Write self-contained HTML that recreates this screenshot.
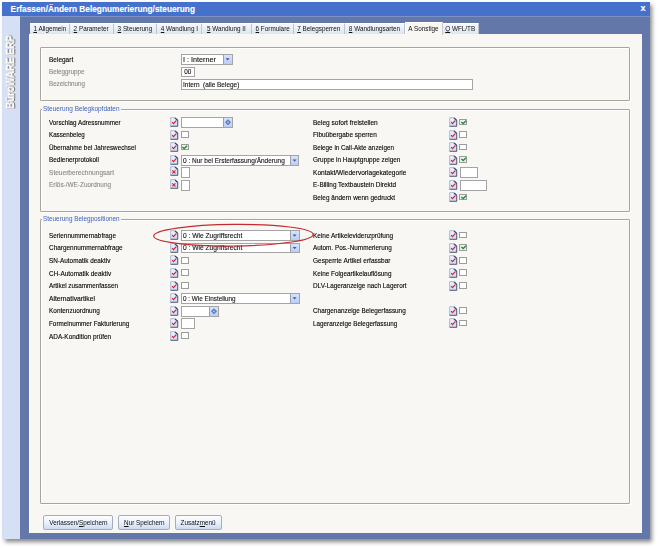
<!DOCTYPE html>
<html><head><meta charset="utf-8">
<style>
html,body{margin:0;padding:0;background:#fff;width:659px;height:548px;overflow:hidden;position:relative;font-family:"Liberation Sans",sans-serif;}
.t{position:absolute;white-space:nowrap;font-size:7.3px;line-height:10px;transform:scaleX(0.87);transform-origin:0 0;-webkit-text-stroke:0.12px currentColor;}
.s{display:inline-block;transform:scaleX(0.87);}
.ic{position:absolute;overflow:visible;}
.cb{position:absolute;width:6px;height:4.6px;border:1px solid #9c9c9c;border-radius:0.5px;background:#fff;margin-left:-0.4px;}
.cb.ck{background:#e6f5e6;}
.in{position:absolute;box-sizing:border-box;border:1px solid #a4a4a4;background:#fff;}
.bt{position:absolute;box-sizing:border-box;background:linear-gradient(#d6e3fd,#bccdf5);border-left:1px solid #9aa0ad;}
.gb{position:absolute;box-sizing:border-box;border:1px solid #a7a69c;border-radius:1px;box-shadow:inset 1px 1px 0 #fff,1px 1px 0 #fff;}
.gl{position:absolute;height:10px;background:#f8f7f3;}
.btn{position:absolute;box-sizing:border-box;border:1px solid #a3adbf;border-radius:2px;background:linear-gradient(#fdfeff,#e9f0fb 55%,#cbdaf3);font-size:7.3px;line-height:13.6px;text-align:center;color:#111;white-space:nowrap;}
.tab{position:absolute;top:23.3px;height:10.7px;box-sizing:border-box;background:linear-gradient(#f5f8fc,#dde5f0);border-right:1px solid #b9c4d4;border-top:1px solid #fff;font-size:7.3px;line-height:10.2px;text-align:center;color:#111;white-space:nowrap;}
.tab.act{top:22px;height:12.5px;background:#f8f7f3;border-right:1px solid #c9cdd3;border-left:1px solid #fff;border-top:1px solid #fff;z-index:2;line-height:12px;}
#shadow{position:absolute;left:5px;top:5px;width:647px;height:537px;background:#6a6a6a;filter:blur(2.2px);opacity:.8;}
#win{position:absolute;left:1.5px;top:1.5px;width:648.7px;height:537.5px;background:#6377a8;overflow:hidden;}
#title{position:absolute;left:0;top:0;width:100%;height:14.3px;background:#4571cc;box-shadow:0 1px 0 #7a93c6;}
#side{position:absolute;left:0;top:14.3px;width:18.5px;height:523.2px;background:#d5e0f4;}
#panel{position:absolute;left:27.5px;top:32.2px;width:613px;height:499.6px;background:#f8f7f3;border-left:1px solid #fff;box-sizing:border-box;}
#root{position:absolute;left:0;top:0;width:659px;height:548px;}
</style></head><body><div id="root">
<svg width="0" height="0" style="position:absolute"><defs><linearGradient id="ig" x1="0" y1="0" x2="0.6" y2="1"><stop offset="0" stop-color="#f2f6ff"/><stop offset="1" stop-color="#d0dbef"/></linearGradient></defs></svg>
<div id="shadow"></div>
<div id="win">
<div id="title"></div>
<div id="side"></div>
<div id="panel"></div>
</div>
<div class="t" style="left:10.6px;top:3.6px;font-size:8.3px;font-weight:bold;color:#fff;line-height:10px;transform:none;">Erfassen/Ändern Belegnumerierung/steuerung</div>
<div class="t" style="left:640.5px;top:3px;font-size:9px;font-weight:bold;color:#fff;line-height:10px;transform:none;">x</div>
<div class="t" style="left:-38.3px;top:67px;width:100px;text-align:center;font-size:10px;font-weight:bold;color:#666;line-height:10px;transform:rotate(-90deg) scaleX(0.96);transform-origin:50% 50%;-webkit-text-stroke:0.35px #666;will-change:transform;">BüroWARE ERP</div>
<div class="t" style="left:-39.5px;top:67px;width:100px;text-align:center;font-size:10px;font-weight:bold;color:#fff;line-height:10px;transform:rotate(-90deg) scaleX(0.96);transform-origin:50% 50%;-webkit-text-stroke:0.3px #fff;will-change:transform;">BüroWARE ERP</div>
<div class="tab" style="left:30px;width:40px"><span class="s"><u>1</u> Allgemein</span></div>
<div class="tab" style="left:70px;width:44px"><span class="s"><u>2</u> Parameter</span></div>
<div class="tab" style="left:114px;width:43px"><span class="s"><u>3</u> Steuerung</span></div>
<div class="tab" style="left:157px;width:45px"><span class="s"><u>4</u> Wandlung I</span></div>
<div class="tab" style="left:202px;width:50px"><span class="s"><u>5</u> Wandlung II</span></div>
<div class="tab" style="left:252px;width:42px"><span class="s"><u>6</u> Formulare</span></div>
<div class="tab" style="left:294px;width:51px"><span class="s"><u>7</u> Belegsperren</span></div>
<div class="tab" style="left:345px;width:60px"><span class="s"><u>8</u> Wandlungsarten</span></div>
<div class="tab act" style="left:404.5px;width:38px"><span class="s">A Sonstige</span></div>
<div class="tab" style="left:442px;width:37px"><span class="s"><u>Q</u> WFL/TB</span></div>
<div class="gb" style="left:40px;top:47px;width:590px;height:54px"></div>
<div class="t" style="left:49px;top:55.20px;color:#000;font-size:7.3px;transform:scaleX(0.890);">Belegart</div>
<div class="t" style="left:49px;top:67.20px;color:#8a8a8a;font-size:7.3px;transform:scaleX(0.860);">Beleggruppe</div>
<div class="t" style="left:49px;top:79.20px;color:#8a8a8a;font-size:7.3px;transform:scaleX(0.851);">Bezeichnung</div>
<div class="in" style="left:181.2px;top:54.25px;width:51.6px;height:10.3px"></div>
<div class="t" style="left:183.2px;top:55.20px;color:#111;transform:scaleX(0.9860028182245185);">I : Interner</div>
<div class="bt" style="left:223.00px;top:55.25px;width:8.8px;height:8.30px"></div>
<svg class="ic" style="left:223.00px;top:55.25px" width="9" height="8.30"><path d="M2.6 3.25 H6.6 L4.6 5.45 Z" fill="#3d5a9c"/></svg>
<div class="in" style="left:181.2px;top:66.50px;width:13.4px;height:10.6px"></div>
<div class="t" style="left:181.2px;width:15.40px;text-align:center;top:67.20px;color:#111;">00</div>
<div class="in" style="left:181.2px;top:79.30px;width:291.5px;height:10.6px"></div>
<div class="t" style="left:183.2px;top:80.20px;color:#111;transform:scaleX(0.8840039254170755);">Intern&nbsp; (alle Belege)</div>
<div class="gb" style="left:40px;top:109px;width:590px;height:103px"></div>
<div class="gl" style="left:42px;top:104px;width:79px"></div>
<div class="t" style="left:42.6px;top:104.3px;color:#3f62b8;-webkit-text-stroke:0;transform:scaleX(0.886)">Steuerung Belegkopfdaten</div>
<div class="t" style="left:49px;top:118.20px;color:#000;font-size:7.3px;transform:scaleX(0.861);">Vorschlag Adressnummer</div>
<svg class="ic" style="left:170px;top:117.20px" width="9" height="10" viewBox="0 0 9 10"><path d="M0.7 0.7 H5.1 L7.7 3.3 V9.3 H0.7 Z" fill="url(#ig)" stroke="#9aa6cc" stroke-width="0.8"/><path d="M0.6 9.3 H7.7 V3.4" stroke="#555b72" stroke-width="0.9" fill="none"/><path d="M5.0 0.8 L7.7 3.5" stroke="#34406c" stroke-width="1.2" fill="none"/><path d="M2.1 5.2 L3.5 6.6 L6.3 3.6" stroke="#c02a40" stroke-width="1.2" fill="none"/></svg>
<div class="t" style="left:49px;top:130.20px;color:#000;font-size:7.3px;transform:scaleX(0.848);">Kassenbeleg</div>
<svg class="ic" style="left:170px;top:129.70px" width="9" height="10" viewBox="0 0 9 10"><path d="M0.7 0.7 H5.1 L7.7 3.3 V9.3 H0.7 Z" fill="url(#ig)" stroke="#9aa6cc" stroke-width="0.8"/><path d="M0.6 9.3 H7.7 V3.4" stroke="#555b72" stroke-width="0.9" fill="none"/><path d="M5.0 0.8 L7.7 3.5" stroke="#34406c" stroke-width="1.2" fill="none"/><path d="M2.1 5.2 L3.5 6.6 L6.3 3.6" stroke="#c02a40" stroke-width="1.2" fill="none"/></svg>
<div class="t" style="left:49px;top:143.20px;color:#000;font-size:7.3px;transform:scaleX(0.868);">Übernahme bei Jahreswechsel</div>
<svg class="ic" style="left:170px;top:142.20px" width="9" height="10" viewBox="0 0 9 10"><path d="M0.7 0.7 H5.1 L7.7 3.3 V9.3 H0.7 Z" fill="url(#ig)" stroke="#9aa6cc" stroke-width="0.8"/><path d="M0.6 9.3 H7.7 V3.4" stroke="#555b72" stroke-width="0.9" fill="none"/><path d="M5.0 0.8 L7.7 3.5" stroke="#34406c" stroke-width="1.2" fill="none"/><path d="M2.1 5.2 L3.5 6.6 L6.3 3.6" stroke="#c02a40" stroke-width="1.2" fill="none"/></svg>
<div class="t" style="left:49px;top:155.20px;color:#000;font-size:7.3px;transform:scaleX(0.879);">Bedienerprotokoll</div>
<svg class="ic" style="left:170px;top:154.70px" width="9" height="10" viewBox="0 0 9 10"><path d="M0.7 0.7 H5.1 L7.7 3.3 V9.3 H0.7 Z" fill="url(#ig)" stroke="#9aa6cc" stroke-width="0.8"/><path d="M0.6 9.3 H7.7 V3.4" stroke="#555b72" stroke-width="0.9" fill="none"/><path d="M5.0 0.8 L7.7 3.5" stroke="#34406c" stroke-width="1.2" fill="none"/><path d="M2.1 5.2 L3.5 6.6 L6.3 3.6" stroke="#c02a40" stroke-width="1.2" fill="none"/></svg>
<div class="t" style="left:49px;top:168.20px;color:#8a8a8a;font-size:7.3px;transform:scaleX(0.900);">Steuerberechnungsart</div>
<svg class="ic" style="left:170px;top:166.10px" width="9" height="10" viewBox="0 0 9 10"><path d="M0.7 0.7 H5.1 L7.7 3.3 V9.3 H0.7 Z" fill="url(#ig)" stroke="#9aa6cc" stroke-width="0.8"/><path d="M0.6 9.3 H7.7 V3.4" stroke="#555b72" stroke-width="0.9" fill="none"/><path d="M5.0 0.8 L7.7 3.5" stroke="#34406c" stroke-width="1.2" fill="none"/><path d="M2.3 4.3 L5.5 7.3 M5.5 4.3 L2.3 7.3" stroke="#c4283a" stroke-width="1.1" fill="none"/></svg>
<div class="t" style="left:49px;top:180.20px;color:#8a8a8a;font-size:7.3px;transform:scaleX(0.879);">Erlös-/WE-Zuordnung</div>
<svg class="ic" style="left:170px;top:178.60px" width="9" height="10" viewBox="0 0 9 10"><path d="M0.7 0.7 H5.1 L7.7 3.3 V9.3 H0.7 Z" fill="url(#ig)" stroke="#9aa6cc" stroke-width="0.8"/><path d="M0.6 9.3 H7.7 V3.4" stroke="#555b72" stroke-width="0.9" fill="none"/><path d="M5.0 0.8 L7.7 3.5" stroke="#34406c" stroke-width="1.2" fill="none"/><path d="M2.3 4.3 L5.5 7.3 M5.5 4.3 L2.3 7.3" stroke="#c4283a" stroke-width="1.1" fill="none"/></svg>
<div class="in" style="left:181.2px;top:117.10px;width:51.6px;height:10.6px"></div>
<div class="bt" style="left:223.00px;top:118.10px;width:8.8px;height:8.60px"></div>
<svg class="ic" style="left:223.00px;top:118.10px" width="9" height="8.60"><path d="M5 1.30 L8 4.30 L5 7.30 L2 4.30 Z" fill="#5a76bf"/><path d="M5 3.00 L6.3 4.30 L5 5.60 L3.7 4.30 Z" fill="#a9bdf0"/></svg>
<div class="cb" style="left:181.2px;top:131.15px"></div>
<div class="cb ck" style="left:181.2px;top:143.65px"></div>
<svg class="ic" style="left:181.2px;top:143.65px" width="8" height="7" viewBox="0 0 8 7"><path d="M1.3 3.0 L3.2 4.6 L6.1 1.7" stroke="#2a8a3a" stroke-width="1.4" fill="none"/></svg>
<div class="in" style="left:181.2px;top:154.70px;width:118.3px;height:11px"></div>
<div class="t" style="left:183.2px;top:156.20px;color:#111;transform:scaleX(0.8899330692528343);">0 : Nur bei Ersterfassung/Änderung</div>
<div class="bt" style="left:289.70px;top:155.70px;width:8.8px;height:9.00px"></div>
<svg class="ic" style="left:289.70px;top:155.70px" width="9" height="9.00"><path d="M2.6 3.60 H6.6 L4.6 5.80 Z" fill="#3d5a9c"/></svg>
<div class="in" style="left:181.2px;top:167.05px;width:8.4px;height:10.7px"></div>
<div class="in" style="left:181.2px;top:179.90px;width:8.4px;height:11px"></div>
<div class="t" style="left:313px;top:118.20px;color:#000;font-size:7.3px;transform:scaleX(0.897);">Beleg sofort freistellen</div>
<svg class="ic" style="left:449px;top:117.20px" width="9" height="10" viewBox="0 0 9 10"><path d="M0.7 0.7 H5.1 L7.7 3.3 V9.3 H0.7 Z" fill="url(#ig)" stroke="#9aa6cc" stroke-width="0.8"/><path d="M0.6 9.3 H7.7 V3.4" stroke="#555b72" stroke-width="0.9" fill="none"/><path d="M5.0 0.8 L7.7 3.5" stroke="#34406c" stroke-width="1.2" fill="none"/><path d="M2.1 5.2 L3.5 6.6 L6.3 3.6" stroke="#c02a40" stroke-width="1.2" fill="none"/></svg>
<div class="cb ck" style="left:459.6px;top:118.65px"></div>
<svg class="ic" style="left:459.6px;top:118.65px" width="8" height="7" viewBox="0 0 8 7"><path d="M1.3 3.0 L3.2 4.6 L6.1 1.7" stroke="#2a8a3a" stroke-width="1.4" fill="none"/></svg>
<div class="t" style="left:313px;top:130.20px;color:#000;font-size:7.3px;transform:scaleX(0.888);">Fibuübergabe sperren</div>
<svg class="ic" style="left:449px;top:129.70px" width="9" height="10" viewBox="0 0 9 10"><path d="M0.7 0.7 H5.1 L7.7 3.3 V9.3 H0.7 Z" fill="url(#ig)" stroke="#9aa6cc" stroke-width="0.8"/><path d="M0.6 9.3 H7.7 V3.4" stroke="#555b72" stroke-width="0.9" fill="none"/><path d="M5.0 0.8 L7.7 3.5" stroke="#34406c" stroke-width="1.2" fill="none"/><path d="M2.1 5.2 L3.5 6.6 L6.3 3.6" stroke="#c02a40" stroke-width="1.2" fill="none"/></svg>
<div class="cb" style="left:459.6px;top:131.15px"></div>
<div class="t" style="left:313px;top:143.20px;color:#000;font-size:7.3px;transform:scaleX(0.864);">Belege in Call-Akte anzeigen</div>
<svg class="ic" style="left:449px;top:142.20px" width="9" height="10" viewBox="0 0 9 10"><path d="M0.7 0.7 H5.1 L7.7 3.3 V9.3 H0.7 Z" fill="url(#ig)" stroke="#9aa6cc" stroke-width="0.8"/><path d="M0.6 9.3 H7.7 V3.4" stroke="#555b72" stroke-width="0.9" fill="none"/><path d="M5.0 0.8 L7.7 3.5" stroke="#34406c" stroke-width="1.2" fill="none"/><path d="M2.1 5.2 L3.5 6.6 L6.3 3.6" stroke="#c02a40" stroke-width="1.2" fill="none"/></svg>
<div class="cb" style="left:459.6px;top:143.65px"></div>
<div class="t" style="left:313px;top:155.20px;color:#000;font-size:7.3px;transform:scaleX(0.875);">Gruppe in Hauptgruppe zeigen</div>
<svg class="ic" style="left:449px;top:154.70px" width="9" height="10" viewBox="0 0 9 10"><path d="M0.7 0.7 H5.1 L7.7 3.3 V9.3 H0.7 Z" fill="url(#ig)" stroke="#9aa6cc" stroke-width="0.8"/><path d="M0.6 9.3 H7.7 V3.4" stroke="#555b72" stroke-width="0.9" fill="none"/><path d="M5.0 0.8 L7.7 3.5" stroke="#34406c" stroke-width="1.2" fill="none"/><path d="M2.1 5.2 L3.5 6.6 L6.3 3.6" stroke="#c02a40" stroke-width="1.2" fill="none"/></svg>
<div class="cb ck" style="left:459.6px;top:156.15px"></div>
<svg class="ic" style="left:459.6px;top:156.15px" width="8" height="7" viewBox="0 0 8 7"><path d="M1.3 3.0 L3.2 4.6 L6.1 1.7" stroke="#2a8a3a" stroke-width="1.4" fill="none"/></svg>
<div class="t" style="left:313px;top:168.20px;color:#000;font-size:7.3px;transform:scaleX(0.900);">Kontakt/Wiedervorlagekategorie</div>
<svg class="ic" style="left:449px;top:167.20px" width="9" height="10" viewBox="0 0 9 10"><path d="M0.7 0.7 H5.1 L7.7 3.3 V9.3 H0.7 Z" fill="url(#ig)" stroke="#9aa6cc" stroke-width="0.8"/><path d="M0.6 9.3 H7.7 V3.4" stroke="#555b72" stroke-width="0.9" fill="none"/><path d="M5.0 0.8 L7.7 3.5" stroke="#34406c" stroke-width="1.2" fill="none"/><path d="M2.1 5.2 L3.5 6.6 L6.3 3.6" stroke="#c02a40" stroke-width="1.2" fill="none"/></svg>
<div class="in" style="left:459.6px;top:167.10px;width:18.4px;height:10.6px"></div>
<div class="t" style="left:313px;top:180.20px;color:#000;font-size:7.3px;transform:scaleX(0.876);">E-Billing Textbaustein Direktd</div>
<svg class="ic" style="left:449px;top:179.70px" width="9" height="10" viewBox="0 0 9 10"><path d="M0.7 0.7 H5.1 L7.7 3.3 V9.3 H0.7 Z" fill="url(#ig)" stroke="#9aa6cc" stroke-width="0.8"/><path d="M0.6 9.3 H7.7 V3.4" stroke="#555b72" stroke-width="0.9" fill="none"/><path d="M5.0 0.8 L7.7 3.5" stroke="#34406c" stroke-width="1.2" fill="none"/><path d="M2.1 5.2 L3.5 6.6 L6.3 3.6" stroke="#c02a40" stroke-width="1.2" fill="none"/></svg>
<div class="in" style="left:459.6px;top:179.90px;width:27.4px;height:11px"></div>
<div class="t" style="left:313px;top:193.20px;color:#000;font-size:7.3px;transform:scaleX(0.884);">Beleg ändern wenn gedruckt</div>
<svg class="ic" style="left:449px;top:192.20px" width="9" height="10" viewBox="0 0 9 10"><path d="M0.7 0.7 H5.1 L7.7 3.3 V9.3 H0.7 Z" fill="url(#ig)" stroke="#9aa6cc" stroke-width="0.8"/><path d="M0.6 9.3 H7.7 V3.4" stroke="#555b72" stroke-width="0.9" fill="none"/><path d="M5.0 0.8 L7.7 3.5" stroke="#34406c" stroke-width="1.2" fill="none"/><path d="M2.1 5.2 L3.5 6.6 L6.3 3.6" stroke="#c02a40" stroke-width="1.2" fill="none"/></svg>
<div class="cb ck" style="left:459.6px;top:193.65px"></div>
<svg class="ic" style="left:459.6px;top:193.65px" width="8" height="7" viewBox="0 0 8 7"><path d="M1.3 3.0 L3.2 4.6 L6.1 1.7" stroke="#2a8a3a" stroke-width="1.4" fill="none"/></svg>
<div class="gb" style="left:40px;top:219px;width:590px;height:285px"></div>
<div class="gl" style="left:42px;top:214px;width:79px"></div>
<div class="t" style="left:42.6px;top:214.3px;color:#3f62b8;-webkit-text-stroke:0;transform:scaleX(0.874)">Steuerung Belegpositionen</div>
<div class="t" style="left:49px;top:231.20px;color:#000;font-size:7.3px;transform:scaleX(0.873);">Seriennummernabfrage</div>
<svg class="ic" style="left:170px;top:230.30px" width="9" height="10" viewBox="0 0 9 10"><path d="M0.7 0.7 H5.1 L7.7 3.3 V9.3 H0.7 Z" fill="url(#ig)" stroke="#9aa6cc" stroke-width="0.8"/><path d="M0.6 9.3 H7.7 V3.4" stroke="#555b72" stroke-width="0.9" fill="none"/><path d="M5.0 0.8 L7.7 3.5" stroke="#34406c" stroke-width="1.2" fill="none"/><path d="M2.1 5.2 L3.5 6.6 L6.3 3.6" stroke="#c02a40" stroke-width="1.2" fill="none"/></svg>
<div class="t" style="left:49px;top:243.20px;color:#000;font-size:7.3px;transform:scaleX(0.881);">Chargennummernabfrage</div>
<svg class="ic" style="left:170px;top:242.88px" width="9" height="10" viewBox="0 0 9 10"><path d="M0.7 0.7 H5.1 L7.7 3.3 V9.3 H0.7 Z" fill="url(#ig)" stroke="#9aa6cc" stroke-width="0.8"/><path d="M0.6 9.3 H7.7 V3.4" stroke="#555b72" stroke-width="0.9" fill="none"/><path d="M5.0 0.8 L7.7 3.5" stroke="#34406c" stroke-width="1.2" fill="none"/><path d="M2.1 5.2 L3.5 6.6 L6.3 3.6" stroke="#c02a40" stroke-width="1.2" fill="none"/></svg>
<div class="t" style="left:49px;top:256.20px;color:#000;font-size:7.3px;transform:scaleX(0.875);">SN-Automatik deaktiv</div>
<svg class="ic" style="left:170px;top:255.46px" width="9" height="10" viewBox="0 0 9 10"><path d="M0.7 0.7 H5.1 L7.7 3.3 V9.3 H0.7 Z" fill="url(#ig)" stroke="#9aa6cc" stroke-width="0.8"/><path d="M0.6 9.3 H7.7 V3.4" stroke="#555b72" stroke-width="0.9" fill="none"/><path d="M5.0 0.8 L7.7 3.5" stroke="#34406c" stroke-width="1.2" fill="none"/><path d="M2.1 5.2 L3.5 6.6 L6.3 3.6" stroke="#c02a40" stroke-width="1.2" fill="none"/></svg>
<div class="t" style="left:49px;top:269.20px;color:#000;font-size:7.3px;transform:scaleX(0.881);">CH-Automatik deaktiv</div>
<svg class="ic" style="left:170px;top:268.04px" width="9" height="10" viewBox="0 0 9 10"><path d="M0.7 0.7 H5.1 L7.7 3.3 V9.3 H0.7 Z" fill="url(#ig)" stroke="#9aa6cc" stroke-width="0.8"/><path d="M0.6 9.3 H7.7 V3.4" stroke="#555b72" stroke-width="0.9" fill="none"/><path d="M5.0 0.8 L7.7 3.5" stroke="#34406c" stroke-width="1.2" fill="none"/><path d="M2.1 5.2 L3.5 6.6 L6.3 3.6" stroke="#c02a40" stroke-width="1.2" fill="none"/></svg>
<div class="t" style="left:49px;top:281.20px;color:#000;font-size:7.3px;transform:scaleX(0.868);">Artikel zusammenfassen</div>
<svg class="ic" style="left:170px;top:280.62px" width="9" height="10" viewBox="0 0 9 10"><path d="M0.7 0.7 H5.1 L7.7 3.3 V9.3 H0.7 Z" fill="url(#ig)" stroke="#9aa6cc" stroke-width="0.8"/><path d="M0.6 9.3 H7.7 V3.4" stroke="#555b72" stroke-width="0.9" fill="none"/><path d="M5.0 0.8 L7.7 3.5" stroke="#34406c" stroke-width="1.2" fill="none"/><path d="M2.1 5.2 L3.5 6.6 L6.3 3.6" stroke="#c02a40" stroke-width="1.2" fill="none"/></svg>
<div class="t" style="left:49px;top:294.20px;color:#000;font-size:7.3px;transform:scaleX(0.920);">Alternativartikel</div>
<svg class="ic" style="left:170px;top:293.20px" width="9" height="10" viewBox="0 0 9 10"><path d="M0.7 0.7 H5.1 L7.7 3.3 V9.3 H0.7 Z" fill="url(#ig)" stroke="#9aa6cc" stroke-width="0.8"/><path d="M0.6 9.3 H7.7 V3.4" stroke="#555b72" stroke-width="0.9" fill="none"/><path d="M5.0 0.8 L7.7 3.5" stroke="#34406c" stroke-width="1.2" fill="none"/><path d="M2.1 5.2 L3.5 6.6 L6.3 3.6" stroke="#c02a40" stroke-width="1.2" fill="none"/></svg>
<div class="t" style="left:49px;top:306.20px;color:#000;font-size:7.3px;transform:scaleX(0.883);">Kontenzuordnung</div>
<svg class="ic" style="left:170px;top:305.78px" width="9" height="10" viewBox="0 0 9 10"><path d="M0.7 0.7 H5.1 L7.7 3.3 V9.3 H0.7 Z" fill="url(#ig)" stroke="#9aa6cc" stroke-width="0.8"/><path d="M0.6 9.3 H7.7 V3.4" stroke="#555b72" stroke-width="0.9" fill="none"/><path d="M5.0 0.8 L7.7 3.5" stroke="#34406c" stroke-width="1.2" fill="none"/><path d="M2.1 5.2 L3.5 6.6 L6.3 3.6" stroke="#c02a40" stroke-width="1.2" fill="none"/></svg>
<div class="t" style="left:49px;top:319.20px;color:#000;font-size:7.3px;transform:scaleX(0.868);">Formelnummer Fakturierung</div>
<svg class="ic" style="left:170px;top:318.36px" width="9" height="10" viewBox="0 0 9 10"><path d="M0.7 0.7 H5.1 L7.7 3.3 V9.3 H0.7 Z" fill="url(#ig)" stroke="#9aa6cc" stroke-width="0.8"/><path d="M0.6 9.3 H7.7 V3.4" stroke="#555b72" stroke-width="0.9" fill="none"/><path d="M5.0 0.8 L7.7 3.5" stroke="#34406c" stroke-width="1.2" fill="none"/><path d="M2.1 5.2 L3.5 6.6 L6.3 3.6" stroke="#c02a40" stroke-width="1.2" fill="none"/></svg>
<div class="t" style="left:49px;top:332.20px;color:#000;font-size:7.3px;transform:scaleX(0.881);">ADA-Kondition prüfen</div>
<svg class="ic" style="left:170px;top:330.94px" width="9" height="10" viewBox="0 0 9 10"><path d="M0.7 0.7 H5.1 L7.7 3.3 V9.3 H0.7 Z" fill="url(#ig)" stroke="#9aa6cc" stroke-width="0.8"/><path d="M0.6 9.3 H7.7 V3.4" stroke="#555b72" stroke-width="0.9" fill="none"/><path d="M5.0 0.8 L7.7 3.5" stroke="#34406c" stroke-width="1.2" fill="none"/><path d="M2.1 5.2 L3.5 6.6 L6.3 3.6" stroke="#c02a40" stroke-width="1.2" fill="none"/></svg>
<div class="in" style="left:181.2px;top:230.10px;width:118.6px;height:10.8px"></div>
<div class="t" style="left:183.2px;top:231.20px;color:#111;transform:scaleX(0.9116546762589928);">0 : Wie Zugriffsrecht</div>
<div class="bt" style="left:290.00px;top:231.10px;width:8.8px;height:8.80px"></div>
<svg class="ic" style="left:290.00px;top:231.10px" width="9" height="8.80"><path d="M2.6 3.50 H6.6 L4.6 5.70 Z" fill="#3d5a9c"/></svg>
<div class="in" style="left:181.2px;top:243.08px;width:118.6px;height:10px"></div>
<div class="t" style="left:183.2px;top:243.20px;color:#111;transform:scaleX(0.9116546762589928);">0 : Wie Zugriffsrecht</div>
<div class="bt" style="left:290.00px;top:244.08px;width:8.8px;height:8.00px"></div>
<svg class="ic" style="left:290.00px;top:244.08px" width="9" height="8.00"><path d="M2.6 3.10 H6.6 L4.6 5.30 Z" fill="#3d5a9c"/></svg>
<div class="cb" style="left:181.2px;top:256.91px"></div>
<div class="cb" style="left:181.2px;top:269.49px"></div>
<div class="cb" style="left:181.2px;top:282.07px"></div>
<div class="in" style="left:181.2px;top:293.20px;width:118.6px;height:10.4px"></div>
<div class="t" style="left:183.2px;top:294.20px;color:#111;transform:scaleX(0.8703205791106515);">0 : Wie Einstellung</div>
<div class="bt" style="left:290.00px;top:294.20px;width:8.8px;height:8.40px"></div>
<svg class="ic" style="left:290.00px;top:294.20px" width="9" height="8.40"><path d="M2.6 3.30 H6.6 L4.6 5.50 Z" fill="#3d5a9c"/></svg>
<div class="in" style="left:181.2px;top:305.93px;width:37.5px;height:10.7px"></div>
<div class="bt" style="left:208.90px;top:306.93px;width:8.8px;height:8.70px"></div>
<svg class="ic" style="left:208.90px;top:306.93px" width="9" height="8.70"><path d="M5 1.35 L8 4.35 L5 7.35 L2 4.35 Z" fill="#5a76bf"/><path d="M5 3.05 L6.3 4.35 L5 5.65 L3.7 4.35 Z" fill="#a9bdf0"/></svg>
<div class="in" style="left:181.2px;top:318.06px;width:13.4px;height:11px"></div>
<div class="cb" style="left:181.2px;top:332.39px"></div>
<div class="t" style="left:313px;top:231.20px;color:#000;font-size:7.3px;transform:scaleX(0.886);">Keine Artikelevidenzprüfung</div>
<svg class="ic" style="left:449px;top:230.30px" width="9" height="10" viewBox="0 0 9 10"><path d="M0.7 0.7 H5.1 L7.7 3.3 V9.3 H0.7 Z" fill="url(#ig)" stroke="#9aa6cc" stroke-width="0.8"/><path d="M0.6 9.3 H7.7 V3.4" stroke="#555b72" stroke-width="0.9" fill="none"/><path d="M5.0 0.8 L7.7 3.5" stroke="#34406c" stroke-width="1.2" fill="none"/><path d="M2.1 5.2 L3.5 6.6 L6.3 3.6" stroke="#c02a40" stroke-width="1.2" fill="none"/></svg>
<div class="cb" style="left:459.6px;top:231.75px"></div>
<div class="t" style="left:313px;top:243.20px;color:#000;font-size:7.3px;transform:scaleX(0.871);">Autom. Pos.-Nummerierung</div>
<svg class="ic" style="left:449px;top:242.88px" width="9" height="10" viewBox="0 0 9 10"><path d="M0.7 0.7 H5.1 L7.7 3.3 V9.3 H0.7 Z" fill="url(#ig)" stroke="#9aa6cc" stroke-width="0.8"/><path d="M0.6 9.3 H7.7 V3.4" stroke="#555b72" stroke-width="0.9" fill="none"/><path d="M5.0 0.8 L7.7 3.5" stroke="#34406c" stroke-width="1.2" fill="none"/><path d="M2.1 5.2 L3.5 6.6 L6.3 3.6" stroke="#c02a40" stroke-width="1.2" fill="none"/></svg>
<div class="cb ck" style="left:459.6px;top:244.33px"></div>
<svg class="ic" style="left:459.6px;top:244.33px" width="8" height="7" viewBox="0 0 8 7"><path d="M1.3 3.0 L3.2 4.6 L6.1 1.7" stroke="#2a8a3a" stroke-width="1.4" fill="none"/></svg>
<div class="t" style="left:313px;top:256.20px;color:#000;font-size:7.3px;transform:scaleX(0.892);">Gesperrte Artikel erfassbar</div>
<svg class="ic" style="left:449px;top:255.46px" width="9" height="10" viewBox="0 0 9 10"><path d="M0.7 0.7 H5.1 L7.7 3.3 V9.3 H0.7 Z" fill="url(#ig)" stroke="#9aa6cc" stroke-width="0.8"/><path d="M0.6 9.3 H7.7 V3.4" stroke="#555b72" stroke-width="0.9" fill="none"/><path d="M5.0 0.8 L7.7 3.5" stroke="#34406c" stroke-width="1.2" fill="none"/><path d="M2.1 5.2 L3.5 6.6 L6.3 3.6" stroke="#c02a40" stroke-width="1.2" fill="none"/></svg>
<div class="cb" style="left:459.6px;top:256.91px"></div>
<div class="t" style="left:313px;top:269.20px;color:#000;font-size:7.3px;transform:scaleX(0.871);">Keine Folgeartikelauflösung</div>
<svg class="ic" style="left:449px;top:268.04px" width="9" height="10" viewBox="0 0 9 10"><path d="M0.7 0.7 H5.1 L7.7 3.3 V9.3 H0.7 Z" fill="url(#ig)" stroke="#9aa6cc" stroke-width="0.8"/><path d="M0.6 9.3 H7.7 V3.4" stroke="#555b72" stroke-width="0.9" fill="none"/><path d="M5.0 0.8 L7.7 3.5" stroke="#34406c" stroke-width="1.2" fill="none"/><path d="M2.1 5.2 L3.5 6.6 L6.3 3.6" stroke="#c02a40" stroke-width="1.2" fill="none"/></svg>
<div class="cb" style="left:459.6px;top:269.49px"></div>
<div class="t" style="left:313px;top:281.20px;color:#000;font-size:7.3px;transform:scaleX(0.875);">DLV-Lageranzeige nach Lagerort</div>
<svg class="ic" style="left:449px;top:280.62px" width="9" height="10" viewBox="0 0 9 10"><path d="M0.7 0.7 H5.1 L7.7 3.3 V9.3 H0.7 Z" fill="url(#ig)" stroke="#9aa6cc" stroke-width="0.8"/><path d="M0.6 9.3 H7.7 V3.4" stroke="#555b72" stroke-width="0.9" fill="none"/><path d="M5.0 0.8 L7.7 3.5" stroke="#34406c" stroke-width="1.2" fill="none"/><path d="M2.1 5.2 L3.5 6.6 L6.3 3.6" stroke="#c02a40" stroke-width="1.2" fill="none"/></svg>
<div class="cb" style="left:459.6px;top:282.07px"></div>
<div class="t" style="left:313px;top:306.20px;color:#000;font-size:7.3px;transform:scaleX(0.872);">Chargenanzeige Belegerfassung</div>
<svg class="ic" style="left:449px;top:305.78px" width="9" height="10" viewBox="0 0 9 10"><path d="M0.7 0.7 H5.1 L7.7 3.3 V9.3 H0.7 Z" fill="url(#ig)" stroke="#9aa6cc" stroke-width="0.8"/><path d="M0.6 9.3 H7.7 V3.4" stroke="#555b72" stroke-width="0.9" fill="none"/><path d="M5.0 0.8 L7.7 3.5" stroke="#34406c" stroke-width="1.2" fill="none"/><path d="M2.1 5.2 L3.5 6.6 L6.3 3.6" stroke="#c02a40" stroke-width="1.2" fill="none"/></svg>
<div class="cb" style="left:459.6px;top:307.23px"></div>
<div class="t" style="left:313px;top:319.20px;color:#000;font-size:7.3px;transform:scaleX(0.869);">Lageranzeige Belegerfassung</div>
<svg class="ic" style="left:449px;top:318.36px" width="9" height="10" viewBox="0 0 9 10"><path d="M0.7 0.7 H5.1 L7.7 3.3 V9.3 H0.7 Z" fill="url(#ig)" stroke="#9aa6cc" stroke-width="0.8"/><path d="M0.6 9.3 H7.7 V3.4" stroke="#555b72" stroke-width="0.9" fill="none"/><path d="M5.0 0.8 L7.7 3.5" stroke="#34406c" stroke-width="1.2" fill="none"/><path d="M2.1 5.2 L3.5 6.6 L6.3 3.6" stroke="#c02a40" stroke-width="1.2" fill="none"/></svg>
<div class="cb" style="left:459.6px;top:319.81px"></div>
<svg class="ic" style="left:0;top:0" width="659" height="548"><ellipse cx="233.4" cy="235.2" rx="79.7" ry="10.8" stroke="#c42a30" stroke-width="1.2" fill="none" transform="rotate(-0.6 233.4 235.2)"/></svg>
<div class="btn" style="left:43.4px;top:515.1px;width:70.1px;height:14.5px"><span class="s">Verlassen/<u>S</u>peichern</span></div>
<div class="btn" style="left:118.2px;top:515.1px;width:52.3px;height:14.5px"><span class="s"><u>N</u>ur Speichern</span></div>
<div class="btn" style="left:175.2px;top:515.1px;width:46.5px;height:14.5px"><span class="s">Zusatz<u>m</u>enü</span></div>
</div></body></html>
